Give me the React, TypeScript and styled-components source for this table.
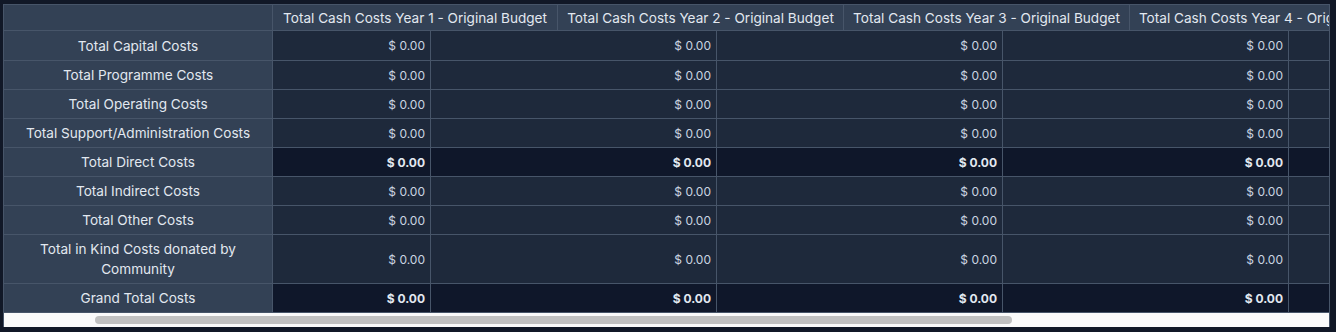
import React from "react";
import styled, { createGlobalStyle } from "styled-components";

const GlobalStyle = createGlobalStyle`
  body {
    margin: 0;
    background: #111827;
    font-family: Inter, "Noto Sans", sans-serif;
  }
  * {
    box-sizing: border-box;
  }
`;

const Page = styled.div`
  padding: 4px 6px 6px 3px;
`;

const Frame = styled.div`
  border: 1px solid #475569;
  border-bottom: none;
  overflow: hidden;
  background: #1e293b;
`;

const Table = styled.div`
  display: flex;
  flex-direction: column;
  width: max-content;
`;

const Row = styled.div<{ $h: number }>`
  display: flex;
  border-bottom: 1px solid #475569;
  min-height: ${(p) => p.$h}px;
`;

const LabelCell = styled.div`
  flex: 0 0 269px;
  background: #334155;
  border-right: 1px solid #475569;
  color: #e2e8f0;
  font-size: 13.6px;
  line-height: 20px;
  padding: 4px 12px;
  display: flex;
  align-items: center;
  justify-content: center;
  text-align: center;
`;

const HeadCell = styled.div<{ $w: number }>`
  flex: 0 0 ${(p) => p.$w}px;
  background: #334155;
  border-right: 1px solid #475569;
  color: #e2e8f0;
  font-size: 13.6px;
  line-height: 20px;
  display: flex;
  align-items: center;
  justify-content: center;
  white-space: nowrap;
`;

const ValueCell = styled.div<{ $w: number; $total?: boolean }>`
  flex: 0 0 ${(p) => p.$w}px;
  background: ${(p) => (p.$total ? "#0f172a" : "#1e293b")};
  border-right: 1px solid #475569;
  color: ${(p) => (p.$total ? "#e2e8f0" : "#cbd5e1")};
  font-size: 12px;
  font-weight: ${(p) => (p.$total ? 700 : 400)};
  padding-right: 5px;
  display: flex;
  align-items: center;
  justify-content: flex-end;
`;

const Track = styled.div`
  height: 14px;
  background: #fafafa;
  display: flex;
  align-items: center;
  padding-left: 91px;
`;

const Thumb = styled.div`
  width: 917px;
  height: 8px;
  border-radius: 4px;
  background: #c1c1c1;
`;

const headers = [1, 2, 3, 4, 5].map(
  (n) => `Total Cash Costs Year ${n} - Original Budget`
);

const valueWidths = [158, 286, 286, 286, 286];

const rows = [
  { label: "Total Capital Costs" },
  { label: "Total Programme Costs" },
  { label: "Total Operating Costs" },
  { label: "Total Support/Administration Costs" },
  { label: "Total Direct Costs", total: true },
  { label: "Total Indirect Costs" },
  { label: "Total Other Costs" },
  { label: "Total in Kind Costs donated by Community" },
  { label: "Grand Total Costs", total: true },
];

const App = () => {
  return (
    <>
      <GlobalStyle />
      <Page>
        <Frame>
          <Table>
            <Row $h={26}>
              <LabelCell />
              {headers.map((h, i) => (
                <HeadCell key={h} $w={i === 0 ? 285 : 286}>
                  {h}
                </HeadCell>
              ))}
            </Row>
            {rows.map((r, i) => (
              <Row key={r.label} $h={i === 0 ? 30 : 29}>
                <LabelCell>{r.label}</LabelCell>
                {valueWidths.map((w, j) => (
                  <ValueCell key={j} $w={w} $total={r.total}>
                    $ 0.00
                  </ValueCell>
                ))}
              </Row>
            ))}
          </Table>
          <Track>
            <Thumb />
          </Track>
        </Frame>
      </Page>
    </>
  );
};

export default App;
